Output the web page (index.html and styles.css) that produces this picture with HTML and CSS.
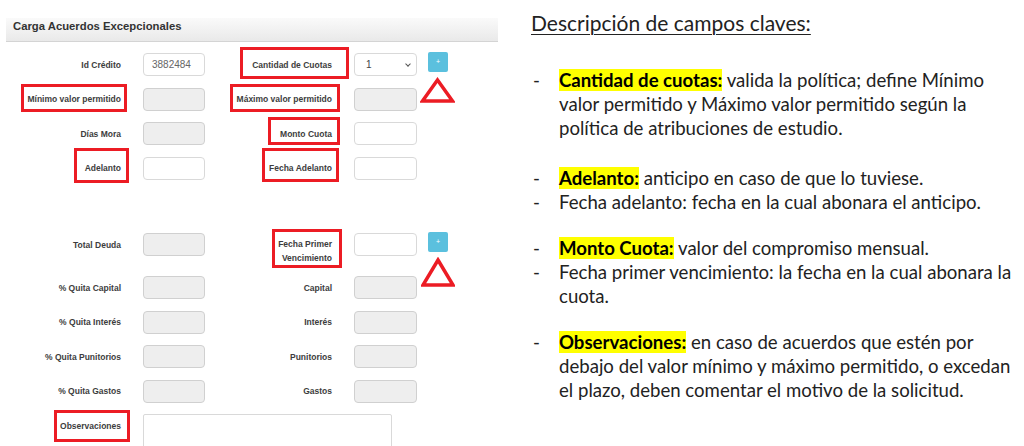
FILE: index.html
```html
<!DOCTYPE html>
<html>
<head>
  <meta charset="UTF-8">
  <title>Carga Acuerdos Excepcionales</title>
  <link rel="stylesheet" href="styles.css">
</head>
<body>
  <div class="page">
    <section class="panel">
      <div class="panel-head">Carga Acuerdos Excepcionales</div>

      <div class="form">
        <div class="row">
          <label class="lbl">Id Crédito</label>
          <div class="inp">3882484</div>
          <label class="lbl">Cantidad de Cuotas</label>
          <div class="inp sel">1 <span class="chev"></span></div>
          <div class="btn-cell"><span class="btn-add">+</span></div>
        </div>
        <div class="row">
          <label class="lbl">Mínimo valor permitido</label>
          <div class="inp ro"></div>
          <label class="lbl">Máximo valor permitido</label>
          <div class="inp ro"></div>
        </div>
        <div class="row">
          <label class="lbl">Días Mora</label>
          <div class="inp ro"></div>
          <label class="lbl">Monto Cuota</label>
          <div class="inp"></div>
        </div>
        <div class="row row-split">
          <label class="lbl">Adelanto</label>
          <div class="inp"></div>
          <label class="lbl">Fecha Adelanto</label>
          <div class="inp"></div>
        </div>

        <div class="row row-tall">
          <label class="lbl">Total Deuda</label>
          <div class="inp ro"></div>
          <label class="lbl lbl-two">Fecha Primer<br>Vencimiento</label>
          <div class="inp"></div>
          <div class="btn-cell"><span class="btn-add">+</span></div>
        </div>
        <div class="row">
          <label class="lbl">% Quita Capital</label>
          <div class="inp ro"></div>
          <label class="lbl">Capital</label>
          <div class="inp ro"></div>
        </div>
        <div class="row">
          <label class="lbl">% Quita Interés</label>
          <div class="inp ro"></div>
          <label class="lbl">Interés</label>
          <div class="inp ro"></div>
        </div>
        <div class="row">
          <label class="lbl">% Quita Punitorios</label>
          <div class="inp ro"></div>
          <label class="lbl">Punitorios</label>
          <div class="inp ro"></div>
        </div>
        <div class="row">
          <label class="lbl">% Quita Gastos</label>
          <div class="inp ro"></div>
          <label class="lbl">Gastos</label>
          <div class="inp ro"></div>
        </div>
        <div class="row row-obs">
          <label class="lbl">Observaciones</label>
          <div class="inp area"></div>
        </div>
      </div>

      <!-- red annotations drawn on top of the screenshot -->
      <div class="mark mk-cuotas"></div>
      <div class="mark mk-min"></div>
      <div class="mark mk-max"></div>
      <div class="mark mk-monto"></div>
      <div class="mark mk-adelanto"></div>
      <div class="mark mk-fadelanto"></div>
      <div class="mark mk-fprimer"></div>
      <div class="mark mk-obs"></div>
      <svg class="tri tri-1" viewBox="0 0 35 26"><polygon points="17.5,3 32.5,24 2.5,24" /></svg>
      <svg class="tri tri-2" viewBox="0 0 34 30"><polygon points="17,3 32,28 2,28" /></svg>
    </section>

    <section class="notes">
      <h2 class="notes-title">Descripción de campos claves:</h2>

      <div class="group">
        <div class="item"><span class="dash">-</span><p><b>Cantidad de cuotas:</b> valida la política; define Mínimo<br>valor permitido y Máximo valor permitido según la<br>política de atribuciones de estudio.</p></div>
      </div>
      <div class="group group-wide">
        <div class="item"><span class="dash">-</span><p><b>Adelanto:</b> anticipo en caso de que lo tuviese.</p></div>
        <div class="item"><span class="dash">-</span><p>Fecha adelanto: fecha en la cual abonara el anticipo.</p></div>
      </div>
      <div class="group">
        <div class="item"><span class="dash">-</span><p><b>Monto Cuota:</b> valor del compromiso mensual.</p></div>
        <div class="item"><span class="dash">-</span><p>Fecha primer vencimiento: la fecha en la cual abonara la<br>cuota.</p></div>
      </div>
      <div class="group">
        <div class="item"><span class="dash">-</span><p><b>Observaciones:</b> en caso de acuerdos que estén por<br>debajo del valor mínimo y máximo permitido, o excedan<br>el plazo, deben comentar el motivo de la solicitud.</p></div>
      </div>
    </section>
  </div>
</body>
</html>
```

FILE: styles.css
```css
body {
  margin: 0;
  background: #fff;
  font-family: "Liberation Sans", Arial, sans-serif;
}
.page {
  position: relative;
  display: flex;
  width: 1024px;
  height: 446px;
  overflow: hidden;
}
.panel {
  width: 500px;
  padding-top: 18px;
}
.panel-head {
  margin-left: 6px;
  width: 485px;
  height: 22px;
  padding: 1px 0 0 7px;
  background: linear-gradient(#fafafa, #e9e9e9);
  border-bottom: 1px solid #d4d4d4;
  color: #333;
  font-size: 11.3px;
  font-weight: bold;
  line-height: 14px;
}
.form {
  padding-top: 11px;
}
.row {
  display: grid;
  grid-template-columns: 143px 62px 149px 63px 31px;
  grid-template-rows: 23px;
  align-items: center;
  height: 23px;
  margin-bottom: 11.5px;
}
.row-split {
  margin-bottom: 53.5px;
}
.row-tall {
  margin-bottom: 20px;
}
.lbl {
  padding-right: 22px;
  text-align: right;
  color: #3d3d3d;
  font-size: 8.5px;
  font-weight: bold;
  white-space: nowrap;
}
.lbl-two {
  align-self: start;
  height: 23px;
  padding-top: 4px;
  line-height: 14px;
}
.inp {
  box-sizing: border-box;
  height: 23px;
  padding: 0 8px;
  background: #fff;
  border: 1px solid #d9d9d9;
  border-radius: 4px;
  color: #666;
  font-size: 10px;
  line-height: 21px;
}
.inp.ro {
  background: #eee;
  border-color: #d0d0d0;
}
.sel {
  position: relative;
  padding-left: 11px;
  color: #444;
}
.chev {
  position: absolute;
  right: 6px;
  top: 8px;
  width: 3px;
  height: 3px;
  border-right: 1.2px solid #555;
  border-bottom: 1.2px solid #555;
  transform: rotate(45deg);
}
.btn-cell {
  align-self: start;
  margin-top: -1px;
  padding-left: 11px;
}
.btn-add {
  display: block;
  width: 20px;
  height: 20px;
  background: #5bc0de;
  border-radius: 2px;
  color: #fff;
  font-size: 7px;
  line-height: 20px;
  text-align: center;
}
.row-obs {
  grid-template-rows: 60px;
  align-items: start;
}
.row-obs .lbl {
  padding-top: 7px;
}
.area {
  grid-column: 2 / 5;
  width: 249px;
  height: 60px;
  border-radius: 2px;
}

.mark {
  position: absolute;
  box-sizing: border-box;
  border: 3px solid #ec1c24;
}
.mk-cuotas { left: 240px; top: 47px; width: 109px; height: 32px; }
.mk-min { left: 21px; top: 84px; width: 106px; height: 28px; }
.mk-max { left: 230px; top: 84px; width: 110px; height: 28px; }
.mk-monto { left: 268px; top: 117px; width: 72px; height: 28px; }
.mk-adelanto { left: 74px; top: 148px; width: 55px; height: 35px; }
.mk-fadelanto { left: 262px; top: 148px; width: 77px; height: 34px; }
.mk-fprimer { left: 272px; top: 229px; width: 70px; height: 39px; }
.mk-obs { left: 54px; top: 410px; width: 76px; height: 32px; }
.tri {
  position: absolute;
  fill: none;
  stroke: #ec1c24;
  stroke-width: 3.5;
}
.tri-1 { left: 420px; top: 77px; width: 35px; height: 26px; }
.tri-2 { left: 421px; top: 257px; width: 34px; height: 30px; }

.notes {
  padding: 9px 0 0 31px;
  color: #222;
  font-family: Lato, "Liberation Sans", sans-serif;
  font-size: 18.6px;
}
.notes-title {
  margin: 0 0 31px;
  font-size: 21px;
  font-weight: normal;
  line-height: 28px;
  text-decoration: underline;
  text-decoration-thickness: 1px;
  text-underline-offset: 3px;
}
.group + .group {
  margin-top: 22px;
}
.group-wide {
  margin-top: 26px !important;
}
.item {
  display: flex;
  line-height: 24px;
  white-space: nowrap;
}
.dash {
  width: 28px;
  padding-left: 2px;
  box-sizing: border-box;
}
.item p {
  margin: 0;
}
.item b {
  color: #000;
  background: #ffff00;
}
```
